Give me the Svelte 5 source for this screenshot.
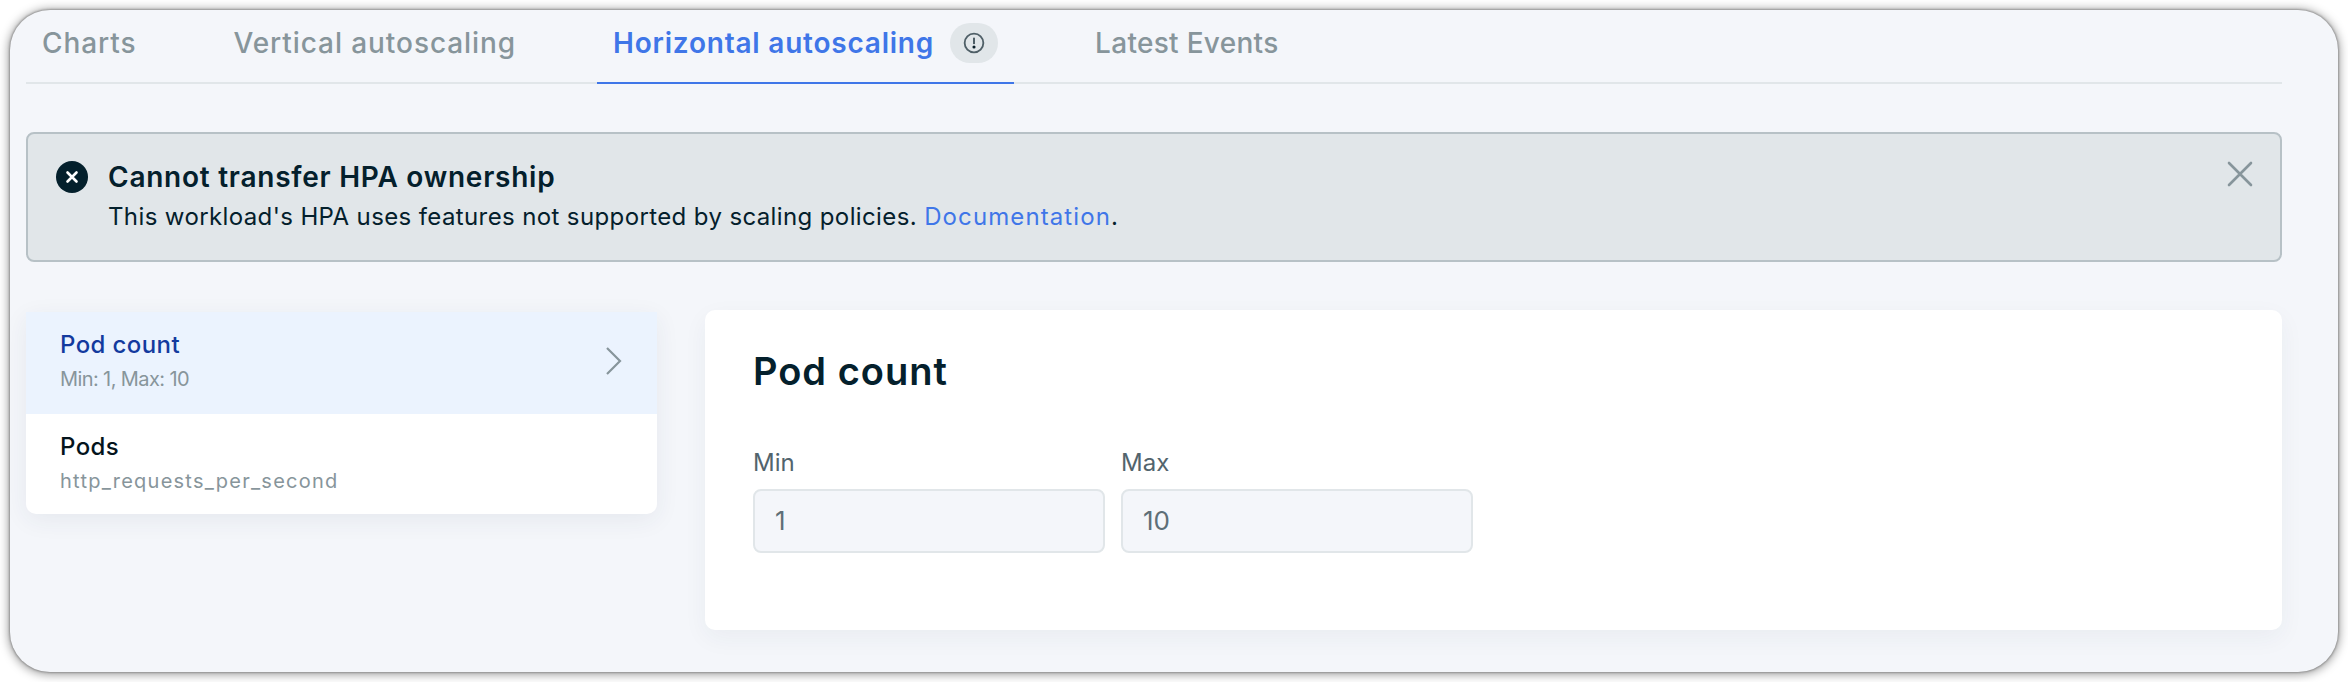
<script>
  const tabs = [
    { label: 'Charts' },
    { label: 'Vertical autoscaling' },
    { label: 'Horizontal autoscaling', active: true, badge: true },
    { label: 'Latest Events', tight: true }
  ];
  const metrics = [
    { title: 'Pod count', sub: 'Min: 1, Max: 10', selected: true },
    { title: 'Pods', sub: 'http_requests_per_second', wide: true }
  ];
  const fields = [
    { label: 'Min', value: '1' },
    { label: 'Max', value: '10' }
  ];
</script>

<div class="page">
  <div class="card">
    <nav class="tabs">
      {#each tabs as t}
        <div class="tab" class:active={t.active} class:tight={t.tight}>
          <span>{t.label}</span>
          {#if t.badge}
            <span class="badge">
              <svg width="22" height="22" viewBox="0 0 24 24" fill="none">
                <circle cx="12" cy="12" r="10.2" stroke="#4f5f67" stroke-width="2" />
                <path d="M12 6.2v7" stroke="#4f5f67" stroke-width="2.2" />
                <circle cx="12" cy="16.4" r="1.7" fill="#0a1f29" />
              </svg>
            </span>
          {/if}
        </div>
      {/each}
    </nav>

    <section class="alert">
      <div class="alert-head">
        <svg class="alert-icon" width="32" height="32" viewBox="0 0 32 32">
          <circle cx="16" cy="16" r="16" fill="#04202c" />
          <path d="M11.5 11.5l9 9M20.5 11.5l-9 9" stroke="#fff" stroke-width="2.6" stroke-linecap="round" />
        </svg>
        <strong>Cannot transfer HPA ownership</strong>
      </div>
      <p>This workload's HPA uses features not supported by scaling policies. <a href="#docs">Documentation</a>.</p>
      <svg class="close" width="26" height="26" viewBox="0 0 26 26" fill="none">
        <path d="M2 2l22 22M24 2L2 24" stroke="#87959b" stroke-width="2.6" stroke-linecap="round" />
      </svg>
    </section>

    <div class="body">
      <aside class="list">
        {#each metrics as m}
          <div class="item" class:selected={m.selected}>
            <div class="item-title">{m.title}</div>
            <div class="item-sub" class:wide={m.wide}>{m.sub}</div>
            {#if m.selected}
              <svg class="chev" width="18" height="30" viewBox="0 0 18 30" fill="none">
                <path d="M2 2l13 13L2 28" stroke="#87959b" stroke-width="2.2" />
              </svg>
            {/if}
          </div>
        {/each}
      </aside>

      <main class="panel">
        <h2>Pod count</h2>
        <div class="fields">
          {#each fields as f}
            <div class="field">
              <div class="label">{f.label}</div>
              <div class="input">{f.value}</div>
            </div>
          {/each}
        </div>
      </main>
    </div>
  </div>
</div>

<style>
  :global(body) {
    margin: 0;
    background: #fff;
  }
  .page {
    width: 2348px;
    height: 682px;
    box-sizing: border-box;
    padding: 10px 10px;
    font-family: Inter, "Noto Sans", sans-serif;
  }
  .card {
    box-sizing: border-box;
    width: 2328px;
    height: 662px;
    padding: 0 56px 0 16px;
    border-radius: 40px;
    background: #f4f6fa;
    box-shadow: 0 0 2px 1px rgba(110, 110, 110, 0.55), 0 1px 10px 2px rgba(0, 0, 0, 0.35);
  }
  .tabs {
    display: flex;
    gap: 65px;
    height: 74px;
    box-sizing: border-box;
    border-bottom: 2px solid #e1e6e9;
  }
  .tab {
    display: flex;
    align-items: center;
    height: 74px;
    box-sizing: border-box;
    padding: 0 16px 6px;
    font-size: 28px;
    letter-spacing: 0.92px;
    color: #87959b;
    font-weight: 500;
    border-bottom: 2px solid transparent;
    gap: 16px;
    white-space: nowrap;
  }
  .tab.tight {
    letter-spacing: 0.3px;
  }
  .tab.active {
    color: #3f76e8;
    font-weight: 600;
    letter-spacing: 0.78px;
    border-bottom-color: #3f76e8;
  }
  .badge {
    display: flex;
    align-items: center;
    justify-content: center;
    width: 48px;
    height: 40px;
    border-radius: 20px;
    background: #e1e6e9;
  }
  .alert {
    position: relative;
    box-sizing: border-box;
    margin-top: 48px;
    height: 130px;
    padding: 25px 0 0 28px;
    background: #e1e6e9;
    border: 2px solid #b7c1c6;
    border-radius: 8px;
    color: #04202c;
  }
  .alert-head {
    display: flex;
    align-items: center;
    gap: 20px;
  }
  .alert-icon {
    flex: none;
  }
  .alert strong {
    font-size: 28px;
    font-weight: 600;
    letter-spacing: 0.75px;
    line-height: 34px;
    padding-top: 1px;
  }
  .alert p {
    margin: 5px 0 0 52px;
    font-size: 24px;
    line-height: 36px;
    letter-spacing: 0.38px;
  }
  .alert a {
    color: #3f76e8;
    text-decoration: none;
    letter-spacing: 1.1px;
  }
  .close {
    position: absolute;
    top: 27px;
    right: 27px;
  }
  .body {
    display: flex;
    align-items: flex-start;
    gap: 48px;
    margin-top: 48px;
  }
  .list {
    flex: none;
    width: 631px;
    margin-top: 2px;
    background: #fff;
    border-radius: 0 0 10px 10px;
    box-shadow: 0 6px 24px rgba(40, 50, 80, 0.07);
  }
  .item {
    position: relative;
    box-sizing: border-box;
    height: 100px;
    padding: 17px 34px 0;
  }
  .item.selected {
    background: #ebf3fe;
    height: 102px;
  }
  .item-title {
    font-size: 24px;
    line-height: 32px;
    font-weight: 500;
    letter-spacing: 0.4px;
    color: #04141c;
  }
  .selected .item-title {
    color: #133a9e;
  }
  .item-sub {
    margin-top: 4px;
    font-size: 20px;
    line-height: 28px;
    letter-spacing: -0.6px;
    color: #87959b;
  }
  .item-sub.wide {
    letter-spacing: 1.25px;
  }
  .chev {
    position: absolute;
    right: 34px;
    top: 34px;
  }
  .panel {
    flex: 1;
    box-sizing: border-box;
    height: 320px;
    padding: 38px 48px 0;
    background: #fff;
    border-radius: 10px;
    box-shadow: 0 8px 24px rgba(40, 50, 80, 0.05);
  }
  h2 {
    margin: 0;
    font-size: 38px;
    line-height: 46px;
    font-weight: 600;
    letter-spacing: 1px;
    color: #04202c;
  }
  .fields {
    display: flex;
    gap: 16px;
    margin-top: 53px;
  }
  .field {
    width: 352px;
  }
  .label {
    font-size: 24px;
    line-height: 32px;
    color: #52646d;
  }
  .input {
    box-sizing: border-box;
    margin-top: 10px;
    height: 64px;
    padding: 0 20px 2px;
    display: flex;
    align-items: center;
    font-size: 26px;
    color: #5e6f77;
    background: #f4f6fa;
    border: 2px solid #e1e6e9;
    border-radius: 8px;
  }
</style>
